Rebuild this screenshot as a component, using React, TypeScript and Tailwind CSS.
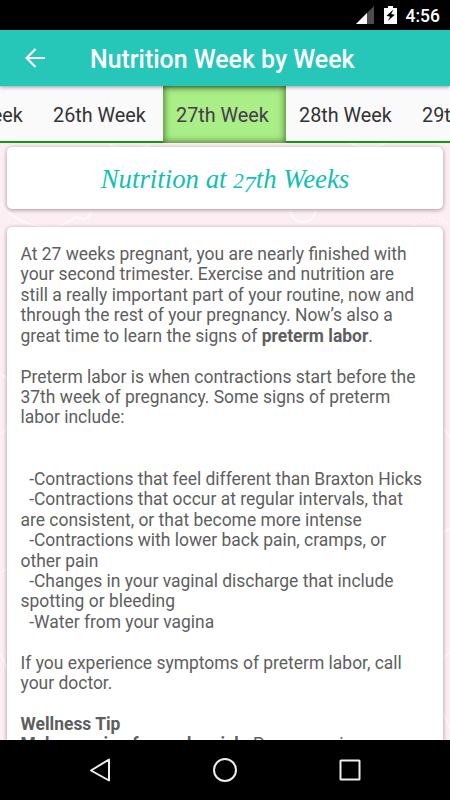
import type { ReactNode } from 'react';

/* Top system bar with signal, battery and clock */
function StatusBar() {
  return (
    <div className="h-[30px] shrink-0 bg-black flex items-center justify-end pr-[10px]">
      <svg className="w-[18px] h-[18px]" viewBox="0 0 18 18">
        <path d="M18 0v18H0z" fill="#4d4d4d" />
        <path d="M11 7v11H0z" fill="#fff" />
      </svg>
      <svg className="w-[13px] h-[18px] ml-[10px]" viewBox="0 0 13 18">
        <path d="M4 0h5v2h4v16H0V2h4z" fill="#fff" />
        <path d="M9.5 3.5L2.5 9.8l3.6.9L3.8 15l7-6.2-3.6-.9z" fill="#000" />
      </svg>
      <span className="ml-[9px] pt-[3px] text-[17.5px] leading-none font-medium text-white">4:56</span>
    </div>
  );
}

function AppBar() {
  return (
    <header className="relative z-10 h-14 shrink-0 bg-[#26c6b9] flex items-center shadow-[0_1px_4px_rgba(0,0,0,0.4)]">
      <svg className="w-5 h-5 ml-[25px]" viewBox="0 0 20 20" fill="none" stroke="#fff" strokeWidth="2.2">
        <path d="M20 10H2M10.5 1L1.6 10l8.9 9" />
      </svg>
      <h1 className="ml-[45px] pt-[4px] text-[24.9px] leading-none font-medium text-white whitespace-nowrap">Nutrition Week by Week</h1>
    </header>
  );
}

const TABS = ['25th Week', '26th Week', '27th Week', '28th Week', '29th Week'];

function WeekTabs() {
  return (
    <nav className="h-[57px] shrink-0 flex overflow-hidden bg-[#fafafa]">
      <div className="flex -ml-[83px]">
        {TABS.map((label) => {
          const active = label === '27th Week';
          return (
            <div
              key={label}
              className={
                active
                  ? 'w-[123px] shrink-0 flex items-center justify-center pr-[4px] pt-[2px] text-[19.8px] text-[#4a3a4e] bg-[#a9ee86] shadow-[inset_0_0_7px_1px_rgba(40,70,20,0.75)]'
                  : 'w-[123px] shrink-0 flex items-center justify-center pr-[4px] text-[19.8px] text-[#333] border-b-2 border-[#0a9f0a] pt-[4px]'
              }
            >
              {label}
            </div>
          );
        })}
      </div>
    </nav>
  );
}

function Card({ className, children }: { className: string; children: ReactNode }) {
  return <div className={`bg-white rounded-[5px] shadow-[0_1px_4px_rgba(60,30,40,0.45)] ${className}`}>{children}</div>;
}

export default function App() {
  return (
    <div className="w-[450px] h-[800px] overflow-hidden flex flex-col bg-[#fceef2] font-['Roboto',sans-serif]">
      <StatusBar />
      <AppBar />
      <WeekTabs />

      <main className="relative flex-1 min-h-0 overflow-hidden px-[7px] pt-1">
        {/* faint swirls behind the cards */}
        <svg className="absolute inset-0 w-[450px] h-[597px]" viewBox="0 0 450 597" fill="none" stroke="#fff" strokeOpacity="0.65" strokeWidth="2">
          <path d="M0 60C10 75 30 85 55 84C68 83 72 72 80 75S89 72 92 68" />
          <path d="M290 66a13 13 0 0 0 26 0M110 2q18 8 40 0M350 0q18 8 36 0" />
          <path d="M415 82q17-15 35 0" strokeDasharray="2 3" />
          <path d="M0 230l7 6M0 290q7 0 7-8M0 430l7-4M0 510l7 15M443 285l7 9M443 390l7-5M443 515l7-6M443 570l7 15" />
        </svg>
        <div className="relative flex flex-col gap-[18px]">
          <Card className="h-[62px] flex items-center justify-center">
            <h2 className="pt-[3px] font-['Liberation_Serif',serif] italic text-[26.8px] leading-none text-[#10c0b2] whitespace-nowrap">
              Nutrition at <span className="text-[21px]">2</span>
              <span className="text-[24px] relative top-[4px]">7</span>th Weeks
            </h2>
          </Card>
          <Card className="h-[620px] pt-[17px] pl-[13.5px]">
            <div className="text-[17.47px] leading-[20.43px] text-[#5e5e5e] whitespace-pre">
              <p>{`At 27 weeks pregnant, you are nearly finished with
your second trimester. Exercise and nutrition are
still a really important part of your routine, now and
through the rest of your pregnancy. Now’s also a
great time to learn the signs of `}<b>preterm labor</b>.</p>
              <p className="mt-[20.43px]">{`Preterm labor is when contractions start before the
37th week of pregnancy. Some signs of preterm
labor include:`}</p>
              <p className="mt-[40.86px]">{`  -Contractions that feel different than Braxton Hicks
  -Contractions that occur at regular intervals, that
are consistent, or that become more intense
  -Contractions with lower back pain, cramps, or
other pain
  -Changes in your vaginal discharge that include
spotting or bleeding
  -Water from your vagina`}</p>
              <p className="mt-[20.43px]">{`If you experience symptoms of preterm labor, call
your doctor.`}</p>
              <p className="mt-[20.43px]">
                <b>{`Wellness Tip
Make a swing for each quick.`}</b> Pregnancy is
              </p>
            </div>
          </Card>
        </div>
      </main>

      {/* Android navigation keys */}
      <footer className="h-[60px] shrink-0 bg-black">
        <svg className="w-[450px] h-[60px]" viewBox="0 0 450 60" fill="none" stroke="#eee" strokeWidth="2" strokeLinejoin="round">
          <path d="M109 19.5v21L91 30.5z" />
          <circle cx="225" cy="30" r="11" />
          <rect x="340.5" y="20.5" width="19" height="19" rx="0.5" />
        </svg>
      </footer>
    </div>
  );
}
